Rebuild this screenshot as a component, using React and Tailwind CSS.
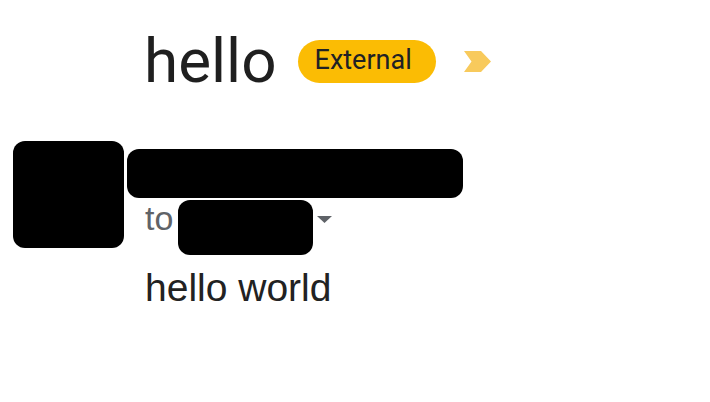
const ImportantMarker = () => (
  <svg width="27" height="21" viewBox="0 0 27 21" aria-hidden="true">
    <path d="M0 0H17L27 10.5L17 21H0L7.5 10.5Z" fill="#f8ca5c" />
  </svg>
);

const Redacted = ({ className }) => <div className={`bg-black ${className}`} />;

export default function App() {
  return (
    <div className="w-[710px] h-[402px] bg-white overflow-hidden">
      {/* Subject line */}
      <div className="flex items-center pl-[144px] pt-[30px]">
        <h1
          className="text-[62px] leading-[62px] font-normal text-[#1f1f1f]"
          style={{ fontFamily: 'Roboto, "Noto Sans", sans-serif' }}
        >
          hello
        </h1>
        <span
          className="ml-[21px] flex items-center h-[43px] w-[138px] pl-[17px] pb-[1px] rounded-full bg-[#fbbc04] text-[27px] leading-none text-[#202124]"
          style={{ fontFamily: 'Roboto, "Noto Sans", sans-serif' }}
        >
          External
        </span>
        <span className="ml-[28px] flex">
          <ImportantMarker />
        </span>
      </div>

      {/* Message */}
      <div className="flex mt-[49px] pl-[13px]">
        <Redacted className="w-[111px] h-[107px] rounded-[12px] shrink-0" />
        <div className="flex flex-col pt-[8px] pl-[3px]">
          <Redacted className="w-[336px] h-[49px] rounded-[12px]" />
          <div
            className="flex items-start mt-[2px] pl-[18px]"
            style={{ fontFamily: '"Liberation Sans", Arial, sans-serif' }}
          >
            <span className="mt-[1px] text-[34px] leading-[34px] text-[#5f6368]">to</span>
            <Redacted className="ml-[5px] w-[135px] h-[55px] rounded-[12px]" />
            <svg width="15" height="7" viewBox="0 0 15 7" className="ml-[4px] mt-[16px]" aria-hidden="true">
              <path d="M0 0H15L7.5 7Z" fill="#5f6368" />
            </svg>
          </div>
          <p
            className="mt-[13px] pl-[18px] text-[39px] leading-[39px] text-[#222222]"
            style={{ fontFamily: '"Liberation Sans", Arial, sans-serif' }}
          >
            hello world
          </p>
        </div>
      </div>
    </div>
  );
}
